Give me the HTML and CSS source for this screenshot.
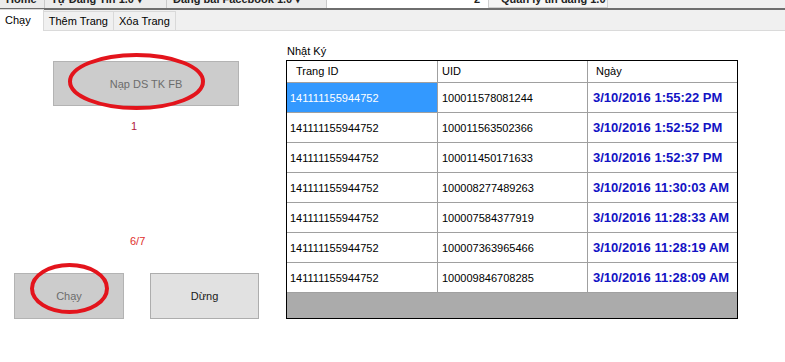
FILE: index.html
```html
<!DOCTYPE html>
<html lang="vi">
<head>
  <meta charset="UTF-8"/>
  <title>Đăng bài Facebook</title>
  <link rel="stylesheet" href="styles.css">
</head>
<body>
  <!-- Toolbar (cut off at the top) -->
  <div class="toolbar">
    <div class="tb-group">
      <span class="tb-item tb-home">Home</span>
      <span class="tb-item tb-ver">Tự Đăng Tin 1.0 ▾</span>
      <span class="tb-item tb-post">Đăng bài Facebook 1.0 ▾</span>
    </div>
    <div class="tb-blank"><span class="tb-item">2</span></div>
    <div class="tb-box"><span class="tb-item">Quản lý tin đăng 1.0</span></div>
  </div>

  <!-- Tabs -->
  <div class="tabs">
    <div class="tab active">Chạy</div>
    <div class="tab">Thêm Trang</div>
    <div class="tab">Xóa Trang</div>
  </div>

  <div class="page">
    <div class="left">
      <button class="btn btn-load">Nạp DS TK FB</button>
      <div class="count">1</div>
      <div class="progress">6/7</div>
      <div class="actions">
        <button class="btn btn-run">Chạy</button>
        <button class="btn btn-stop">Dừng</button>
      </div>

      <!-- red marks drawn over the buttons -->
      <svg class="mark mark-load" width="137" height="57" viewBox="0 0 137 57">
        <ellipse cx="68.5" cy="28.5" rx="66.5" ry="26.5"/>
      </svg>
      <svg class="mark mark-run" width="79" height="51" viewBox="0 0 79 51">
        <ellipse cx="39.5" cy="25.5" rx="37.5" ry="23.5"/>
      </svg>
    </div>

    <div class="right">
      <div class="log-label">Nhật Ký</div>
      <div class="grid">
        <div class="row head">
          <div class="cell">Trang ID</div>
          <div class="cell">UID</div>
          <div class="cell">Ngày</div>
        </div>
        <div class="row">
          <div class="cell selected">141111155944752</div>
          <div class="cell">100011578081244</div>
          <div class="cell date">3/10/2016 1:55:22 PM</div>
        </div>
        <div class="row">
          <div class="cell">141111155944752</div>
          <div class="cell">100011563502366</div>
          <div class="cell date">3/10/2016 1:52:52 PM</div>
        </div>
        <div class="row">
          <div class="cell">141111155944752</div>
          <div class="cell">100011450171633</div>
          <div class="cell date">3/10/2016 1:52:37 PM</div>
        </div>
        <div class="row">
          <div class="cell">141111155944752</div>
          <div class="cell">100008277489263</div>
          <div class="cell date">3/10/2016 11:30:03 AM</div>
        </div>
        <div class="row">
          <div class="cell">141111155944752</div>
          <div class="cell">100007584377919</div>
          <div class="cell date">3/10/2016 11:28:33 AM</div>
        </div>
        <div class="row">
          <div class="cell">141111155944752</div>
          <div class="cell">100007363965466</div>
          <div class="cell date">3/10/2016 11:28:19 AM</div>
        </div>
        <div class="row">
          <div class="cell">141111155944752</div>
          <div class="cell">100009846708285</div>
          <div class="cell date">3/10/2016 11:28:09 AM</div>
        </div>
        <div class="filler"></div>
      </div>
    </div>
  </div>
</body>
</html>
```

FILE: styles.css
```css
*, *::before, *::after { box-sizing: border-box; }

body {
  margin: 0;
  width: 785px; height: 362px;
  overflow: hidden;
  background: #fff; color: #000;
  font-family: "Liberation Sans", Arial, sans-serif;
  font-size: 11px;
}

/* Toolbar, only its lower edge is visible */
.toolbar {
  display: flex;
  height: 10px;
  background: #f0f0f0;
  border-bottom: 2px solid #6e6e6e;
  overflow: hidden;
}
.tb-group { display: flex; width: 327px; background: #ececec; }
.tb-item {
  display: block;
  margin-top: -8px;
  line-height: 14px;
  font-weight: bold;
  color: #222;
  white-space: nowrap;
}
.tb-group .tb-item { padding: 0 6px; border-right: 1px solid #c9c9c9; }
.tb-home { width: 45px; }
.tb-ver  { width: 122px; }
.tb-post { flex: 1; }
.tb-blank {
  width: 161px; background: #fff;
  display: flex; justify-content: flex-end;
  padding-right: 8px;
}
.tb-box {
  width: 120px; padding: 0 12px;
  background: #f4f4f4;
  border: 1px solid #cfcfcf; border-top: none;
}

/* Tabs */
.tabs {
  display: flex; align-items: flex-end;
  height: 21px;
  background: #f0f0f0;
  border-bottom: 1px solid #dadada;
}
.tab {
  height: 19px;
  padding: 2px 5px 0;
  border: 1px solid #d9d9d9; border-bottom: none; border-left: none;
  background: #f0f0f0;
  line-height: 14px;
  white-space: nowrap;
}
.tab.active {
  height: 22px;
  margin-bottom: -1px;
  padding: 3px 12px 0 5px;
  background: #fff;
}

/* Page */
.page { display: flex; }
.left {
  position: relative;
  width: 286px; height: 331px;
  display: flex; flex-direction: column; align-items: flex-start;
}

.btn {
  font-family: "Liberation Sans", Arial, sans-serif;
  font-size: 11px;
  padding: 0;
  border: 1px solid #b3b3b3;
  border-radius: 0;
}
.btn-load {
  margin: 30px 0 0 53px;
  width: 186px; height: 45px;
  background: #cccccc; color: #6d6d6d;
}
.count {
  margin: 13px 0 0 131px;
  line-height: 14px;
  color: #b0203c;
}
.progress {
  margin: 101px 0 0 130px;
  line-height: 14px;
  color: #e0302c;
}
.actions {
  display: flex; gap: 26px;
  margin: 25px 0 0 14px;
}
.btn-run  { width: 110px; height: 46px; background: #cccccc; color: #6d6d6d; }
.btn-stop { width: 109px; height: 46px; background: #e1e1e1; color: #1a1a1a; border-color: #adadad; }

.mark { position: absolute; }
.mark ellipse { fill: none; stroke: #e3141c; stroke-width: 4; }
.mark-load { left: 68px; top: 22px; }
.mark-run  { left: 30px; top: 232px; }

/* Log grid */
.right { padding: 13px 0 0 0; }
.log-label { line-height: 14px; padding-left: 1px; }
.grid {
  margin-top: 2px;
  width: 452px;
  border: 1px solid #000;
}
.row {
  display: grid;
  grid-template-columns: 151px 150px 149px;
  height: 30px;
}
.cell {
  border-right: 1px solid #a0a0a0;
  border-bottom: 1px solid #a0a0a0;
  padding: 1px 4px 0 3px;
  line-height: 28px;
  white-space: nowrap; overflow: hidden;
}
.cell:last-child { border-right: none; }
.head { height: 22px; }
.head .cell { line-height: 20px; padding: 0 0 0 9px; }
.head .cell:nth-child(2) { padding-left: 9px; }
.row .cell:nth-child(2) { padding-left: 4px; }
.row .cell:nth-child(3) { padding-left: 5px; }
.head .cell:nth-child(3) { padding-left: 8px; }
.selected { background: #3399ff; color: #fff; }
.date {
  font-size: 13px; font-weight: bold;
  color: #1212c4;
}
.filler { height: 25px; background: #ababab; }
```
